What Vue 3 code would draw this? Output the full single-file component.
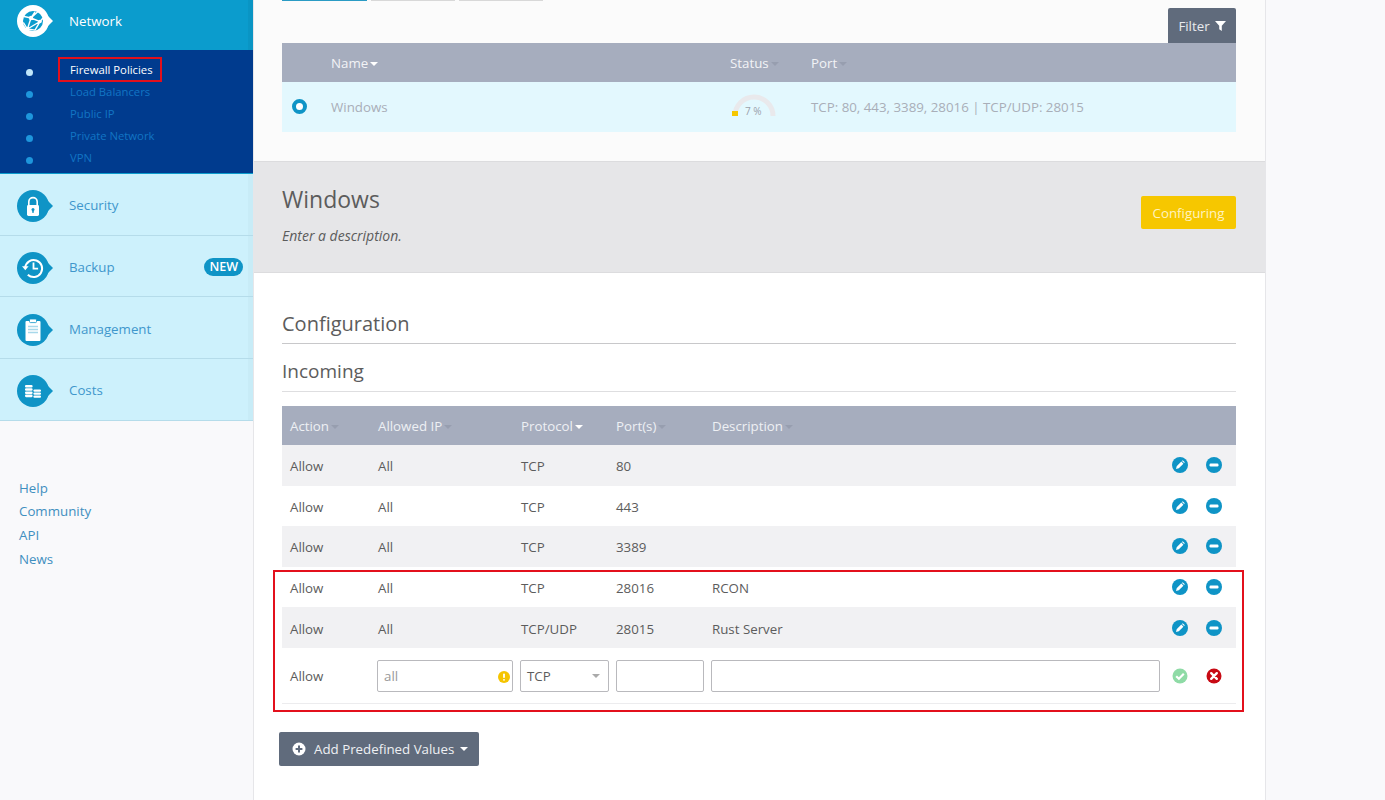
<template>
  <div class="page">
    <aside class="sidebar">
      <div class="nav-head">
        <span class="nav-icon nav-icon-white">
          <svg viewBox="0 0 32 32" width="32" height="32">
            <circle cx="16" cy="16" r="10" fill="#0a9ccd" />
            <path d="M7 11.5l7 1.5 7-6.5M14 13l-3.6 11M14 13l9 3.5-5 8.6M10.4 24l7.6 1.1M6.4 17.5l4 6.5M23 16.5l3-3.5M14 13l4-6M10.4 24l12.6-7.5" fill="none" stroke="#fff" stroke-width="1.4" />
            <circle cx="14" cy="13" r="2.2" fill="#fff" />
            <circle cx="23" cy="16.5" r="1.8" fill="#fff" />
            <circle cx="10.4" cy="24" r="1.6" fill="#fff" />
          </svg>
        </span>
        <span class="nav-head-label">Network</span>
      </div>
      <ul class="subnav">
        <li v-for="(item, i) in subItems" :key="item" :class="{ active: i === 0 }">
          <span class="dot"></span>
          <span class="sub-label">{{ item }}</span>
        </li>
        <span class="mark mark-sub"></span>
      </ul>
      <div v-for="item in navItems" :key="item.label" class="nav-item">
        <span class="nav-icon">
          <svg viewBox="0 0 32 32" width="32" height="32" v-html="item.icon"></svg>
        </span>
        <span class="nav-label">{{ item.label }}</span>
        <span v-if="item.badge" class="badge">{{ item.badge }}</span>
      </div>
      <nav class="help-links">
        <a v-for="link in links" :key="link">{{ link }}</a>
      </nav>
    </aside>

    <main class="main">
      <section class="top">
        <div class="tabs">
          <span class="tab tab-on"></span>
          <span class="tab"></span>
          <span class="tab"></span>
        </div>
        <div class="filter-row">
          <button class="filter-btn">
            Filter
            <svg viewBox="0 0 12 12" width="11" height="11"><path d="M0 1h12L7.4 6.4V12L4.6 10V6.4z" fill="#fff" /></svg>
          </button>
        </div>
        <div class="server-head">
          <span></span>
          <span class="sort on">Name</span>
          <span class="sort">Status</span>
          <span class="sort">Port</span>
        </div>
        <div class="server-row">
          <span class="radio"></span>
          <span>Windows</span>
          <span class="gauge">
            <svg viewBox="0 0 46 26" width="46" height="26">
              <path d="M4 24a19 19 0 0 1 38 0" fill="none" stroke="#e9e9ec" stroke-width="5" />
              <path d="M1 19h6v5H1z" fill="#f6c700" />
            </svg>
            <span class="gauge-value">7 %</span>
          </span>
          <span>TCP: 80, 443, 3389, 28016 | TCP/UDP: 28015</span>
        </div>
      </section>

      <section class="title-band">
        <div>
          <h1>Windows</h1>
          <p>Enter a description.</p>
        </div>
        <span class="status-btn">Configuring</span>
      </section>

      <section class="config">
        <h2>Configuration</h2>
        <h3>Incoming</h3>
        <div class="rule rule-head">
          <span class="sort">Action</span>
          <span class="sort">Allowed IP</span>
          <span class="sort on">Protocol</span>
          <span class="sort">Port(s)</span>
          <span class="sort">Description</span>
        </div>
        <div v-for="row in rules" :key="row.port" class="rule">
          <span class="cell">Allow</span>
          <span class="cell">All</span>
          <span class="cell">{{ row.protocol }}</span>
          <span class="cell">{{ row.port }}</span>
          <span class="cell">{{ row.description }}</span>
          <span class="act">
            <svg viewBox="0 0 16 16" width="16" height="16">
              <circle cx="8" cy="8" r="8" fill="#0f94c6" />
              <path d="M4 12l.7-2.8 4.6-4.6 2.1 2.1-4.6 4.6zM10 3.9l.7-.7 2.1 2.1-.7.7z" fill="#fff" />
            </svg>
          </span>
          <span class="act">
            <svg viewBox="0 0 16 16" width="16" height="16">
              <circle cx="8" cy="8" r="8" fill="#0f94c6" />
              <rect x="3.5" y="6.6" width="9" height="2.8" rx="1.2" fill="#fff" />
            </svg>
          </span>
        </div>
        <div class="rule rule-edit">
          <span>Allow</span>
          <span class="field-wrap">
            <input class="field field-ip" placeholder="all" />
            <svg class="warn" viewBox="0 0 12 12" width="12" height="12">
              <circle cx="6" cy="6" r="6" fill="#f5c400" />
              <rect x="5.1" y="2.4" width="1.8" height="4.6" rx=".8" fill="#fff" />
              <rect x="5.1" y="7.9" width="1.8" height="1.8" rx=".8" fill="#fff" />
            </svg>
          </span>
          <span class="field-wrap">
            <span class="field field-select">TCP<i class="select-caret"></i></span>
          </span>
          <span class="field-wrap field-wrap-port"><input class="field field-port" /></span>
          <span class="field-wrap"><input class="field field-desc" /></span>
          <span class="act">
            <svg viewBox="0 0 16 16" width="16" height="16">
              <circle cx="8" cy="8" r="7.5" fill="#8fdba6" />
              <path d="M4.2 8.2l2.7 2.6 4.9-5" fill="none" stroke="#fff" stroke-width="2.2" />
            </svg>
          </span>
          <span class="act">
            <svg viewBox="0 0 16 16" width="16" height="16">
              <circle cx="8" cy="8" r="7.5" fill="#c80a14" />
              <path d="M5.2 5.2l5.6 5.6M10.8 5.2l-5.6 5.6" fill="none" stroke="#fff" stroke-width="2.4" stroke-linecap="round" />
            </svg>
          </span>
          <span class="mark mark-rows"></span>
        </div>
        <button class="add-btn">
          <svg viewBox="0 0 14 14" width="14" height="14">
            <circle cx="7" cy="7" r="6.5" fill="#fff" />
            <path d="M7 3.6v6.8M3.6 7h6.8" stroke="#5f6a7c" stroke-width="2" />
          </svg>
          Add Predefined Values
          <i class="btn-caret"></i>
        </button>
      </section>
    </main>
  </div>
</template>

<script setup>
const subItems = ['Firewall Policies', 'Load Balancers', 'Public IP', 'Private Network', 'VPN']
const links = ['Help', 'Community', 'API', 'News']

const navItems = [
  {
    label: 'Security',
    icon: '<path d="M11.8 16v-4.2a4.2 4.2 0 0 1 8.4 0V16" fill="none" stroke="#fff" stroke-width="1.6"/><rect x="10" y="15" width="12" height="11" rx="1.4" fill="#fff"/><circle cx="16" cy="19.4" r="1.5" fill="#0f94c6"/><rect x="15.2" y="19.6" width="1.6" height="3.2" fill="#0f94c6"/>'
  },
  {
    label: 'Backup',
    badge: 'NEW',
    icon: '<path d="M8.2 15.5a8.5 8.5 0 1 1 2.6 7.2" fill="none" stroke="#fff" stroke-width="2"/><path d="M5 14.2h6.6l-3.3 4z" fill="#fff"/><path d="M16.5 10.5v6.2h4.6" fill="none" stroke="#fff" stroke-width="1.8"/>'
  },
  {
    label: 'Management',
    icon: '<rect x="8.5" y="7" width="15" height="20" rx="1" fill="#fff"/><rect x="12.5" y="5" width="7" height="3.6" rx="1" fill="#fff" stroke="#0f94c6" stroke-width=".8"/><path d="M11 12.5h10M11 15.5h10M11 18.5h10" stroke="#a8d8ea" stroke-width="1.6"/>'
  },
  {
    label: 'Costs',
    icon: '<g fill="#fff"><rect x="8" y="10" width="7.6" height="2.6" rx="1.1"/><rect x="8" y="13.2" width="7.6" height="2.6" rx="1.1"/><rect x="8" y="16.4" width="7.6" height="2.6" rx="1.1"/><rect x="8" y="19.6" width="7.6" height="2.6" rx="1.1"/><rect x="16.4" y="14.4" width="7.6" height="2.4" rx="1.1"/><rect x="16.4" y="17.4" width="7.6" height="2.4" rx="1.1"/><rect x="16.4" y="20.4" width="7.6" height="2.4" rx="1.1"/></g>'
  }
]

const rules = [
  { protocol: 'TCP', port: '80', description: '' },
  { protocol: 'TCP', port: '443', description: '' },
  { protocol: 'TCP', port: '3389', description: '' },
  { protocol: 'TCP', port: '28016', description: 'RCON' },
  { protocol: 'TCP/UDP', port: '28015', description: 'Rust Server' }
]
</script>

<style>
html,
body {
  margin: 0;
  background: #f9f9fb;
}
</style>

<style scoped>
.page {
  display: flex;
  width: 1385px;
  height: 800px;
  overflow: hidden;
  background: #f9f9fb;
  color: #5c5c5c;
  font-family: "Open Sans", sans-serif;
  font-size: 13.3px;
}

.sidebar {
  flex: 0 0 253px;
  width: 253px;
}

.nav-head {
  position: relative;
  display: flex;
  align-items: center;
  height: 50px;
  box-sizing: border-box;
  padding: 0 0 9px 17px;
  background: #0b9ccd;
  box-shadow: inset -5px 0 0 rgba(0, 0, 0, 0.04);
}

.nav-head::after {
  content: "";
  position: absolute;
  left: 23px;
  top: 50px;
  border: 7px solid transparent;
  border-top: 6px solid #0b9ccd;
  border-bottom: 0;
}

.nav-head-label {
  margin-left: 20px;
  color: #fff;
}

.nav-icon {
  position: relative;
  display: block;
  flex: 0 0 32px;
  width: 32px;
  height: 32px;
  border-radius: 50%;
  background: #0f94c6;
}

.nav-icon::after {
  content: "";
  position: absolute;
  right: -4px;
  top: 11px;
  border: 5px solid transparent;
  border-left: 5px solid #0f94c6;
  border-right: 0;
}

.nav-icon svg {
  display: block;
}

.nav-icon-white {
  background: #fff;
}

.nav-icon-white::after {
  border-left-color: #fff;
}

.subnav {
  position: relative;
  margin: 0;
  height: 124px;
  box-sizing: border-box;
  padding: 10px 0 0 24px;
  list-style: none;
  background: #003b8e;
  border-bottom: 1px solid #0b9ccd;
}

.subnav li {
  display: flex;
  align-items: center;
  height: 22px;
  color: #1275c4;
  font-size: 11.3px;
}

.subnav li.active {
  color: #fff;
}

.sub-label {
  margin-bottom: 4px;
}

.dot {
  width: 7px;
  height: 7px;
  margin: 2px 37px 0 2px;
  border-radius: 50%;
  background: #1e96dc;
}

.active .dot {
  background: #bfe6fb;
}

.mark {
  position: absolute;
  box-sizing: border-box;
  border: 2px solid #e3101c;
  pointer-events: none;
}

.mark-sub {
  left: 58px;
  top: 7px;
  width: 104px;
  height: 25px;
}

.nav-item {
  display: flex;
  align-items: center;
  height: 61.7px;
  box-sizing: border-box;
  padding: 2px 10px 0 17px;
  background: #cdf1fc;
  border-bottom: 1px solid #b5dcea;
  box-shadow: inset -5px 0 0 rgba(0, 0, 0, 0.02);
}

.nav-item .nav-icon {
  margin-top: 2px;
}

.nav-label {
  margin-left: 20px;
  color: #3f97cc;
}

.badge {
  margin-left: auto;
  padding: 0 5px;
  border-radius: 9px;
  background: #0f94c6;
  color: #fff;
  font-size: 12.5px;
  font-weight: 600;
  line-height: 18px;
}

.help-links {
  display: flex;
  flex-direction: column;
  margin-top: 56px;
  padding-left: 19px;
}

.help-links a {
  color: #3f8fc0;
  line-height: 23.7px;
}

.main {
  flex: 0 0 1011px;
  width: 1011px;
  height: 800px;
  border-right: 1px solid #e6e6e9;
  border-left: 1px solid #e6e6e9;
  background: #fff;
}

.top {
  height: 162px;
  box-sizing: border-box;
  padding: 0 29px 0 28px;
  background: #fbfbfb;
  border-bottom: 1px solid #dcdcde;
  color: #a9aeb8;
}

.tabs {
  display: flex;
  gap: 4px;
  height: 1px;
}

.tab {
  width: 84px;
  height: 1px;
  background: #d8d8d8;
}

.tab-on {
  width: 85px;
  background: #2a9bc4;
}

.filter-row {
  display: flex;
  justify-content: flex-end;
  padding-top: 7px;
}

.filter-btn {
  display: flex;
  align-items: center;
  justify-content: center;
  gap: 5px;
  width: 68px;
  height: 35px;
  padding: 0;
  border: 0;
  border-radius: 2px 2px 0 0;
  background: #606b7c;
  color: #e8eaee;
  font: inherit;
}

.server-head,
.server-row {
  display: grid;
  grid-template-columns: 49px 399px 81px 1fr;
  align-items: center;
}

.server-head {
  height: 39px;
  background: #a6adbe;
  color: #f2f3f6;
}

.server-row {
  height: 50px;
  background: #e3f8fe;
}

.radio {
  box-sizing: border-box;
  width: 15px;
  height: 15px;
  margin: -2px 0 0 10px;
  border: 4.5px solid #0f94c6;
  border-radius: 50%;
  background: #fff;
}

.gauge {
  position: relative;
  display: block;
  width: 46px;
  height: 26px;
  margin: -4px 0 0 1px;
}

.gauge-value {
  position: absolute;
  left: 14px;
  top: 12px;
  color: #9aa0aa;
  font-size: 10px;
}

.sort::after {
  content: "";
  display: inline-block;
  margin-left: 2px;
  vertical-align: 2px;
  border: 4px solid transparent;
  border-top: 4px solid #979eaf;
  border-bottom: 0;
}

.sort.on::after {
  border-top-color: #fff;
}

.title-band {
  display: flex;
  align-items: flex-start;
  justify-content: space-between;
  height: 111px;
  box-sizing: border-box;
  padding: 22px 29px 0 28px;
  background: #e6e6e8;
  border-bottom: 1px solid #dcdcde;
}

.title-band h1 {
  margin: 0;
  color: #5c5c5c;
  font-size: 23px;
  font-weight: 400;
  line-height: 30px;
}

.title-band p {
  margin: 12px 0 0;
  font-size: 14px;
  font-style: italic;
  line-height: 20px;
}

.status-btn {
  width: 95px;
  height: 33px;
  margin-top: 12px;
  border-radius: 2px;
  background: #f6c700;
  color: #fff3c0;
  line-height: 34px;
  text-align: center;
}

.config {
  padding: 37px 29px 0 28px;
}

.config h2,
.config h3 {
  margin: 0;
  color: #5c5c5c;
  font-weight: 400;
}

.config h2 {
  height: 33px;
  border-bottom: 1px solid #c8c8ca;
  font-size: 20px;
  line-height: 28px;
}

.config h3 {
  height: 34px;
  margin-top: 13px;
  border-bottom: 1px solid #dedee0;
  font-size: 19px;
  line-height: 28px;
}

.rule {
  position: relative;
  display: grid;
  grid-template-columns: 88px 143px 95px 96px 1fr 34px 34px;
  align-items: center;
  height: 40.6px;
  padding: 0 5px 0 8px;
}

.rule:nth-of-type(even) {
  background: #f1f1f3;
}

.rule:nth-of-type(odd) {
  background: #fff;
}

.cell {
  padding-top: 2px;
}

.rule-head {
  height: 39px;
  margin-top: 14px;
  background: #a6adbe !important;
  color: #eef0f4;
}

.rule-edit {
  height: 53px;
  padding-top: 2px;
  background: #fff !important;
  border-bottom: 1px solid #ececee;
}

.act {
  display: flex;
  justify-content: center;
}

.field-wrap {
  position: relative;
  display: block;
  margin-left: -1px;
}

.field-wrap-port {
  margin-left: 0;
}

.field {
  display: block;
  box-sizing: border-box;
  height: 32px;
  border: 1px solid #b9b9bd;
  border-radius: 2px;
  background: #fff;
  color: #5c5c5c;
  font: inherit;
  outline: 0;
}

.field-ip {
  width: 136px;
  padding: 0 6px;
}

.field-ip::placeholder {
  color: #999;
}

.warn {
  position: absolute;
  left: 121px;
  top: 11px;
}

.field-select {
  position: relative;
  width: 89px;
  padding-left: 6px;
  line-height: 30px;
}

.select-caret {
  position: absolute;
  right: 8px;
  top: 13px;
  border: 4px solid transparent;
  border-top: 4px solid #aaa;
  border-bottom: 0;
}

.field-port {
  width: 88px;
}

.field-desc {
  width: 449px;
}

.mark-rows {
  left: -9px;
  bottom: -9px;
  width: 971px;
  height: 142px;
}

.add-btn {
  display: flex;
  align-items: center;
  width: 200px;
  height: 34px;
  margin: 28px 0 0 -3px;
  padding: 0 0 0 13px;
  border: 0;
  border-radius: 2px;
  background: #606b7c;
  color: #eef0f3;
  font: inherit;
}

.add-btn svg {
  margin-right: 8px;
}

.btn-caret {
  margin-left: 6px;
  border: 4px solid transparent;
  border-top: 4px solid #fff;
  border-bottom: 0;
}
</style>
